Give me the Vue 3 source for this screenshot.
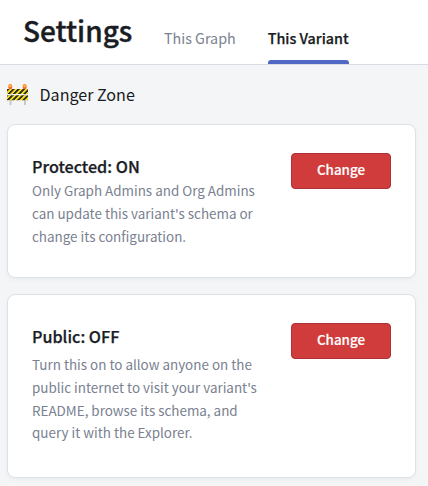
<script setup>
const cards = [
  {
    id: 'protected',
    title: 'Protected: ON',
    lines: [
      'Only Graph Admins and Org Admins',
      "can update this variant's schema or",
      'change its configuration.',
    ],
  },
  {
    id: 'public',
    title: 'Public: OFF',
    lines: [
      'Turn this on to allow anyone on the',
      "public internet to visit your variant's",
      'README, browse its schema, and',
      'query it with the Explorer.',
    ],
  },
]
</script>

<template>
  <div class="page">
    <header class="header">
      <h1 class="title">Settings</h1>
      <nav class="tabs">
        <a class="tab">This Graph</a>
        <a class="tab active">This Variant</a>
      </nav>
    </header>
    <main class="content">
      <h2 class="section">
        <svg class="barrier" viewBox="0 0 22 22" aria-hidden="true">
          <defs>
            <pattern id="stripes" width="5.2" height="6" patternUnits="userSpaceOnUse" patternTransform="skewX(-45)">
              <rect width="5.2" height="6" fill="#f6dc1f" />
              <rect width="2.5" height="6" fill="#292a20" />
            </pattern>
          </defs>
          <path d="M3.5 6v15M18 6v15" stroke="#c6c8ca" stroke-width="2" />
          <rect x="1.4" y="0" width="3.8" height="5.5" rx="1.7" fill="#f9682b" />
          <rect x="15.8" y="0" width="3.8" height="5.5" rx="1.7" fill="#f9682b" />
          <circle cx="3.3" cy="1.8" r="1.5" fill="#ffb53b" />
          <circle cx="17.7" cy="1.8" r="1.5" fill="#ffb53b" />
          <rect x="0" y="5" width="21" height="5" rx=".5" fill="url(#stripes)" />
          <rect x="0" y="11.3" width="21" height="5" rx=".5" fill="url(#stripes)" />
        </svg>
        <span class="section-name">Danger Zone</span>
      </h2>
      <section v-for="card in cards" :key="card.id" class="card" :class="card.id">
        <div class="copy">
          <h3 class="name">{{ card.title }}</h3>
          <p class="text">
            <span v-for="line in card.lines" :key="line" class="line">{{ line }}</span>
          </p>
        </div>
        <button class="button" type="button">Change</button>
      </section>
    </main>
  </div>
</template>

<style>
body {
  background: #f4f5f7;
  overflow: hidden;
}
</style>

<style scoped>
.page {
  box-sizing: border-box;
  height: 486px;
  overflow: hidden;
  background: #f4f5f7;
  color: #191c23;
  font-family: "Source Sans Pro", "Noto Sans CJK SC", sans-serif;
}
h1, h2, h3, p { margin: 0; }
.header {
  box-sizing: border-box;
  display: flex;
  height: 65px;
  padding-left: 23px;
  background: #fff;
  border-bottom: 1px solid #dadde5;
}
.title {
  width: 141px;
  font-size: 28px;
  font-weight: 500;
  line-height: 61px;
  -webkit-text-stroke: .4px currentColor;
  white-space: nowrap;
}
.tabs { display: flex; gap: 32px; }
.tab {
  box-sizing: border-box;
  height: 64px;
  padding-top: 26px;
  color: #7a8190;
  font-size: 14.3px;
  line-height: 24px;
  white-space: nowrap;
}
.active {
  display: flex;
  flex-direction: column;
  justify-content: space-between;
  color: #191c23;
  font-weight: 500;
  -webkit-text-stroke: .25px currentColor;
}
.active::after {
  content: "";
  height: 4px;
  border-radius: 3px 3px 0 0;
  background: #4f68c4;
}
.content { padding: 0 12px 0 7px; }
.section {
  display: flex;
  align-items: center;
  gap: 10.5px;
  height: 59px;
  font-size: 16.1px;
  font-weight: 400;
  white-space: nowrap;
}
.section-name { padding-bottom: 2px; }
.barrier { width: 22px; height: 22px; }
.card {
  box-sizing: border-box;
  display: flex;
  justify-content: space-between;
  align-items: flex-start;
  width: 409px;
  height: 154px;
  padding: 28px 24px 0;
  background: #fff;
  border: 1px solid #dee1e8;
  border-radius: 8px;
  box-shadow: 0 2px 4px rgba(25, 28, 35, .04);
}
.public { height: 184px; margin-top: 16px; }
.name {
  font-size: 16.15px;
  font-weight: 500;
  line-height: 26px;
  -webkit-text-stroke: .25px currentColor;
  white-space: nowrap;
}
.text {
  color: #7a8190;
  font-size: 13.43px;
  line-height: 22.8px;
}
.protected .text { margin-top: 0; }
.public .text { margin-top: 4px; }
.line { display: block; white-space: nowrap; }
.button {
  box-sizing: border-box;
  width: 100px;
  height: 36px;
  padding: 0 0 3px;
  color: #fff;
  background: #d03b3b;
  border: 1px solid #ae3034;
  border-radius: 4px;
  font-family: inherit;
  font-size: 13.43px;
  font-weight: 500;
  line-height: 31px;
  -webkit-text-stroke: .2px currentColor;
}
</style>
